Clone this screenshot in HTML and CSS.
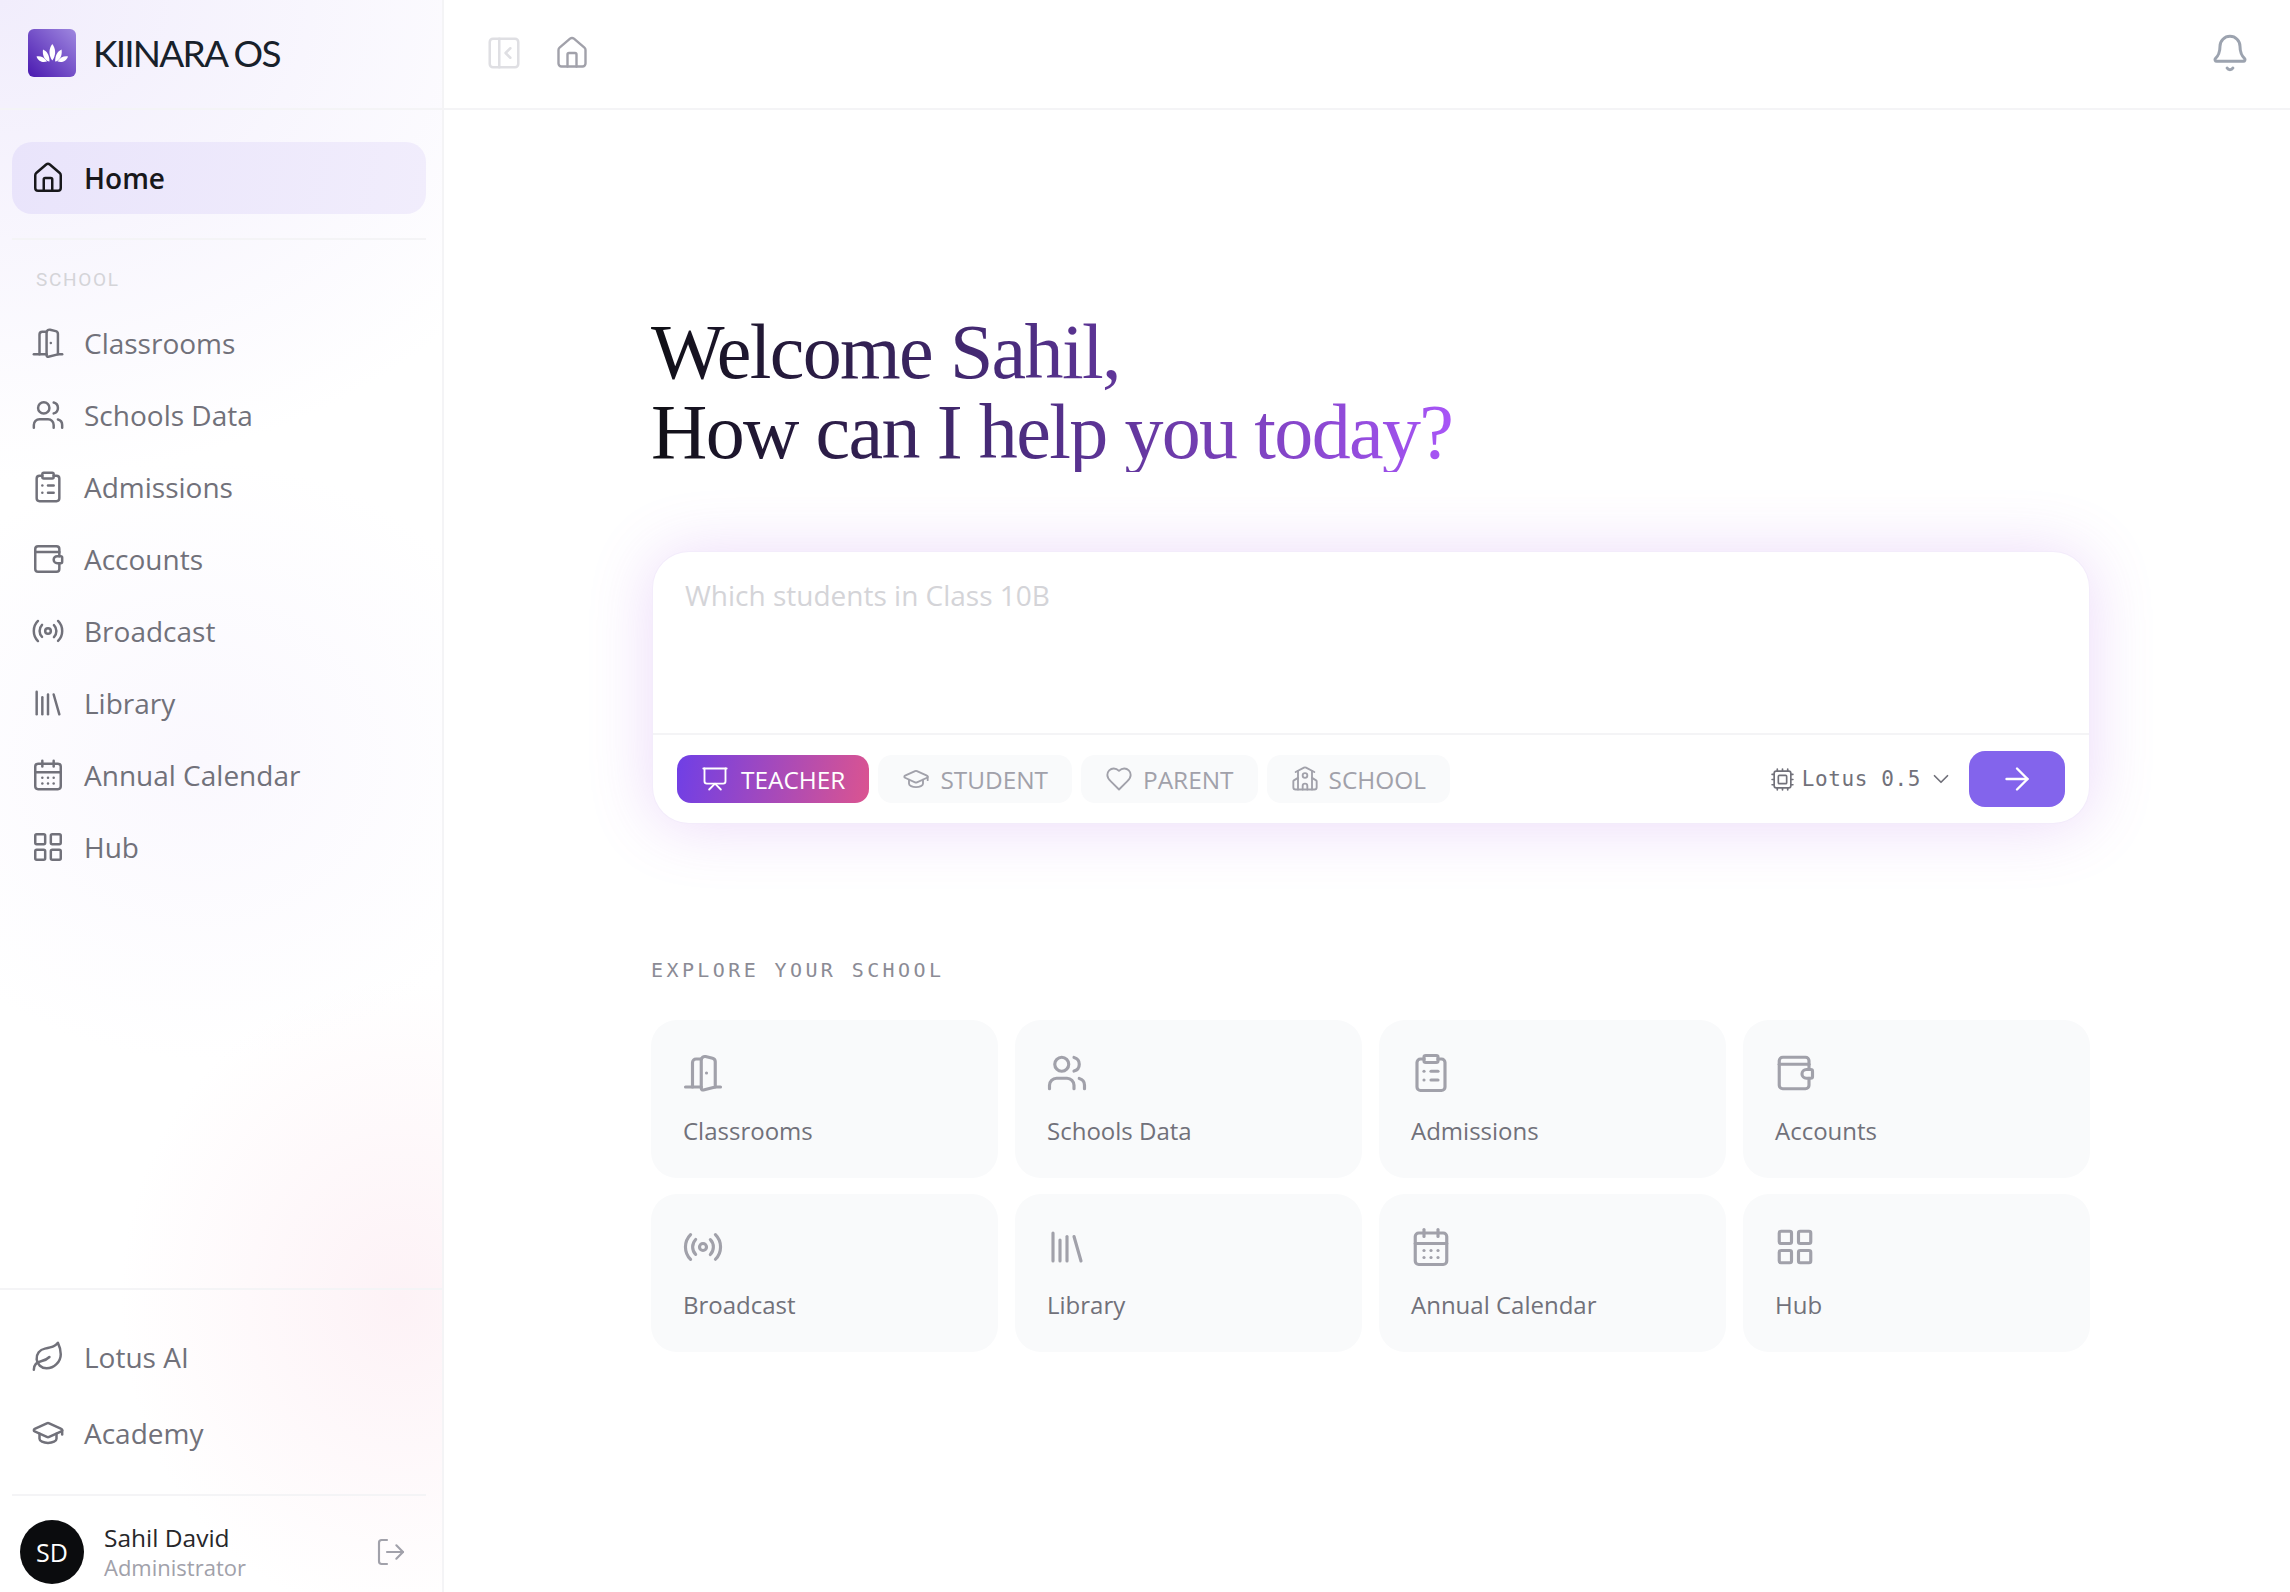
FILE: index.html
```
<!DOCTYPE html>
<html>

<head>
    <title>Kiinara OS</title>
    <link rel="stylesheet" href="styles.css">
</head>

<body>
    <svg class="sprite" xmlns="http://www.w3.org/2000/svg">
        <symbol id="i-home" viewBox="0 0 24 24"><path d="M15 21v-8a1 1 0 0 0-1-1h-4a1 1 0 0 0-1 1v8"/><path d="M3 10a2 2 0 0 1 .709-1.528l7-6a2 2 0 0 1 2.582 0l7 6A2 2 0 0 1 21 10v9a2 2 0 0 1-2 2H5a2 2 0 0 1-2-2z"/></symbol>
        <symbol id="i-door" viewBox="0 0 24 24"><path d="M11 20H2"/><path d="M11 4.562v16.157a1 1 0 0 0 1.242.97L19 20V5.562a2 2 0 0 0-1.515-1.94l-4-1A2 2 0 0 0 11 4.561z"/><path d="M11 4H8a2 2 0 0 0-2 2v14"/><path d="M14 12h.01"/><path d="M22 20h-3"/></symbol>
        <symbol id="i-users" viewBox="0 0 24 24"><path d="M16 21v-2a4 4 0 0 0-4-4H6a4 4 0 0 0-4 4v2"/><circle cx="9" cy="7" r="4"/><path d="M22 21v-2a4 4 0 0 0-3-3.87"/><path d="M16 3.13a4 4 0 0 1 0 7.75"/></symbol>
        <symbol id="i-clipboard" viewBox="0 0 24 24"><rect x="8" y="2" width="8" height="4" rx="1"/><path d="M16 4h2a2 2 0 0 1 2 2v14a2 2 0 0 1-2 2H6a2 2 0 0 1-2-2V6a2 2 0 0 1 2-2h2"/><path d="M12 11h4"/><path d="M12 16h4"/><path d="M8 11h.01"/><path d="M8 16h.01"/></symbol>
        <symbol id="i-wallet" viewBox="0 0 24 24"><path d="M20 10V5a2 2 0 0 0-2-2H5a2 2 0 0 0-2 2v14a2 2 0 0 0 2 2h13a2 2 0 0 0 2-2v-4"/><path d="M3 7h17"/><path d="M18.5 10H21a1 1 0 0 1 1 1v3a1 1 0 0 1-1 1h-2.500a2.500 2.500 0 0 1 0-5z"/></symbol>
        <symbol id="i-radio" viewBox="0 0 24 24"><path d="M4.900 19.100C1 15.200 1 8.800 4.900 4.900"/><path d="M7.800 16.200c-2.300-2.300-2.300-6.100 0-8.500"/><circle cx="12" cy="12" r="2"/><path d="M16.200 7.800c2.300 2.300 2.300 6.100 0 8.500"/><path d="M19.100 4.900C23 8.800 23 15.100 19.100 19"/></symbol>
        <symbol id="i-library" viewBox="0 0 24 24"><path d="m16 6 4 14"/><path d="M12 6v14"/><path d="M8 8v12"/><path d="M4 4v16"/></symbol>
        <symbol id="i-calendar" viewBox="0 0 24 24"><path d="M8 2v4"/><path d="M16 2v4"/><rect x="3" y="4" width="18" height="18" rx="2"/><path d="M3 10h18"/><path d="M8 14h.01"/><path d="M12 14h.01"/><path d="M16 14h.01"/><path d="M8 18h.01"/><path d="M12 18h.01"/><path d="M16 18h.01"/></symbol>
        <symbol id="i-grid" viewBox="0 0 24 24"><rect x="3" y="3" width="7" height="7" rx="1"/><rect x="14" y="3" width="7" height="7" rx="1"/><rect x="14" y="14" width="7" height="7" rx="1"/><rect x="3" y="14" width="7" height="7" rx="1"/></symbol>
        <symbol id="i-leaf" viewBox="0 0 24 24"><path d="M11 20A7 7 0 0 1 9.800 6.100C15.500 5 17 4.480 19 2c1 2 2 4.180 2 8 0 5.500-4.780 10-10 10Z"/><path d="M2 21c0-3 1.850-5.360 5.080-6C9.500 14.520 12 13 13 12"/></symbol>
        <symbol id="i-cap" viewBox="0 0 24 24"><path d="M21.420 10.922a1 1 0 0 0-.019-1.838L12.830 5.180a2 2 0 0 0-1.660 0L2.600 9.080a1 1 0 0 0 0 1.832l8.570 3.908a2 2 0 0 0 1.660 0z"/><path d="M22 10v3"/><path d="M6 12.500V16a6 3 0 0 0 12 0v-3.500"/></symbol>
        <symbol id="i-logout" viewBox="0 0 24 24"><path d="M9 21H5a2 2 0 0 1-2-2V5a2 2 0 0 1 2-2h4"/><path d="m16 17 5-5-5-5"/><path d="M21 12H9"/></symbol>
        <symbol id="i-panel" viewBox="0 0 24 24"><rect x="3" y="3" width="18" height="18" rx="2"/><path d="M9 3v18"/><path d="m16 15-3-3 3-3"/></symbol>
        <symbol id="i-bell" viewBox="0 0 24 24"><path d="M10.268 21a2 2 0 0 0 3.464 0"/><path d="M3.262 15.326A1 1 0 0 0 4 17h16a1 1 0 0 0 .740-1.673C19.410 13.956 18 12.499 18 8A6 6 0 0 0 6 8c0 4.499-1.411 5.956-2.738 7.326"/></symbol>
        <symbol id="i-board" viewBox="0 0 24 24"><path d="M2 3h20"/><path d="M21 3v11a2 2 0 0 1-2 2H5a2 2 0 0 1-2-2V3"/><path d="m7 21 5-5 5 5"/></symbol>
        <symbol id="i-heart" viewBox="0 0 24 24"><path d="M19 14c1.490-1.460 3-3.210 3-5.500A5.500 5.500 0 0 0 16.500 3c-1.760 0-3 .500-4.500 2-1.500-1.500-2.740-2-4.500-2A5.500 5.500 0 0 0 2 8.500c0 2.300 1.500 4.050 3 5.500l7 7Z"/></symbol>
        <symbol id="i-school" viewBox="0 0 24 24"><path d="M14 21v-3a2 2 0 0 0-4 0v3"/><path d="M18 5v16"/><path d="m4 6 7.106-3.790a2 2 0 0 1 1.788 0L20 6"/><path d="m6 11-3.520 2.147a1 1 0 0 0-.480.854V19a2 2 0 0 0 2 2h16a2 2 0 0 0 2-2v-5a1 1 0 0 0-.480-.853L18 11"/><path d="M6 5v16"/><circle cx="12" cy="9" r="2"/></symbol>
        <symbol id="i-cpu" viewBox="0 0 24 24"><path d="M12 20v2"/><path d="M12 2v2"/><path d="M17 20v2"/><path d="M17 2v2"/><path d="M2 12h2"/><path d="M2 17h2"/><path d="M2 7h2"/><path d="M20 12h2"/><path d="M20 17h2"/><path d="M20 7h2"/><path d="M7 20v2"/><path d="M7 2v2"/><rect x="4" y="4" width="16" height="16" rx="2"/><rect x="8" y="8" width="8" height="8" rx="1"/></symbol>
        <symbol id="i-chevron" viewBox="0 0 24 24"><path d="m6 9 6 6 6-6"/></symbol>
        <symbol id="i-arrow" viewBox="0 0 24 24"><path d="M5 12h14"/><path d="m12 5 7 7-7 7"/></symbol>
    </svg>

    <div class="app">
        <aside class="sidebar">
            <div class="brand">
                <div class="brand-logo">
                    <svg viewBox="0 0 48 48" width="48" height="48">
                        <path d="M24.300 15c3.500 4.500 4 11 0 16.500-4-5.500-3.500-12 0-16.500z"/>
                        <path d="M15 20.500c3.500 1.500 6.500 5 6.500 12-4-.500-7.500-5-6.500-12z"/>
                        <path d="M33.600 20.500c-3.500 1.500-6.500 5-6.500 12 4-.500 7.500-5 6.500-12z"/>
                        <path d="M8.500 27.500c4-.800 8 1 10.500 5-4 1.200-8.500.500-10.500-5z"/>
                        <path d="M40 27.500c-4-.800-8 1-10.500 5 4 1.200 8.500.500 10.500-5z"/>
                    </svg>
                </div>
                <span class="brand-name">KIINARA OS</span>
            </div>

            <nav class="nav-top">
                <a class="nav-item nav-active"><svg class="icon"><use href="#i-home"/></svg>Home</a>
            </nav>

            <div class="nav-school">
                <div class="nav-label">SCHOOL</div>
                <a class="nav-item"><svg class="icon"><use href="#i-door"/></svg>Classrooms</a>
                <a class="nav-item"><svg class="icon"><use href="#i-users"/></svg>Schools Data</a>
                <a class="nav-item"><svg class="icon"><use href="#i-clipboard"/></svg>Admissions</a>
                <a class="nav-item"><svg class="icon"><use href="#i-wallet"/></svg>Accounts</a>
                <a class="nav-item"><svg class="icon"><use href="#i-radio"/></svg>Broadcast</a>
                <a class="nav-item"><svg class="icon"><use href="#i-library"/></svg>Library</a>
                <a class="nav-item"><svg class="icon"><use href="#i-calendar"/></svg>Annual Calendar</a>
                <a class="nav-item"><svg class="icon"><use href="#i-grid"/></svg>Hub</a>
            </div>

            <div class="nav-bottom">
                <a class="nav-item"><svg class="icon"><use href="#i-leaf"/></svg>Lotus AI</a>
                <a class="nav-item"><svg class="icon"><use href="#i-cap"/></svg>Academy</a>
            </div>

            <div class="user">
                <div class="avatar">SD</div>
                <div class="user-info">
                    <div class="user-name">Sahil David</div>
                    <div class="user-role">Administrator</div>
                </div>
                <svg class="icon logout"><use href="#i-logout"/></svg>
            </div>
        </aside>

        <div class="main">
            <header class="topbar">
                <svg class="icon panel-icon"><use href="#i-panel"/></svg>
                <svg class="icon top-home"><use href="#i-home"/></svg>
                <svg class="icon bell"><use href="#i-bell"/></svg>
            </header>

            <div class="content">
                <h1 class="welcome">Welcome Sahil,<br>How can I help you today?</h1>

                <div class="prompt">
                    <div class="prompt-input">Which students in Class 10B</div>
                    <div class="prompt-bar">
                        <div class="role-tab role-active"><svg class="icon"><use href="#i-board"/></svg>TEACHER</div>
                        <div class="role-tab"><svg class="icon"><use href="#i-cap"/></svg>STUDENT</div>
                        <div class="role-tab"><svg class="icon"><use href="#i-heart"/></svg>PARENT</div>
                        <div class="role-tab"><svg class="icon"><use href="#i-school"/></svg>SCHOOL</div>
                        <div class="model">
                            <svg class="icon"><use href="#i-cpu"/></svg>
                            <span>Lotus 0.5</span>
                            <svg class="icon chevron"><use href="#i-chevron"/></svg>
                        </div>
                        <button class="send"><svg class="icon"><use href="#i-arrow"/></svg></button>
                    </div>
                </div>

                <div class="explore-label">EXPLORE YOUR SCHOOL</div>
                <div class="explore-grid">
                    <a class="card"><svg class="icon"><use href="#i-door"/></svg>Classrooms</a>
                    <a class="card"><svg class="icon"><use href="#i-users"/></svg>Schools Data</a>
                    <a class="card"><svg class="icon"><use href="#i-clipboard"/></svg>Admissions</a>
                    <a class="card"><svg class="icon"><use href="#i-wallet"/></svg>Accounts</a>
                    <a class="card"><svg class="icon"><use href="#i-radio"/></svg>Broadcast</a>
                    <a class="card"><svg class="icon"><use href="#i-library"/></svg>Library</a>
                    <a class="card"><svg class="icon"><use href="#i-calendar"/></svg>Annual Calendar</a>
                    <a class="card"><svg class="icon"><use href="#i-grid"/></svg>Hub</a>
                </div>
            </div>
        </div>
    </div>
</body>

</html>
```

FILE: styles.css
```
body {
    margin: 0;
    overflow: hidden;
    background: #fff;
    font-family: "Open Sans", "Noto Sans", sans-serif;
}

.sprite {
    display: none;
}

.icon {
    flex: none;
    fill: none;
    stroke: currentColor;
    stroke-width: 1.6;
    stroke-linecap: round;
    stroke-linejoin: round;
}

.app {
    display: flex;
    height: 100vh;
}

/* Sidebar */
.sidebar {
    width: 444px;
    flex: none;
    display: flex;
    flex-direction: column;
    border-right: 2px solid #f4f4f6;
    box-sizing: border-box;
    background:
        radial-gradient(ellipse 280px 320px at 400px 1300px, #fdf2f6 0%, rgba(253, 242, 246, 0) 100%),
        radial-gradient(ellipse 340px 300px at 200px 760px, #faf8fe 0%, rgba(250, 248, 254, 0) 100%),
        radial-gradient(ellipse 620px 480px at 0 0, #f1edfc 0%, rgba(241, 237, 252, 0) 100%),
        #fff;
}

.brand {
    height: 110px;
    flex: none;
    display: flex;
    align-items: center;
    gap: 17px;
    padding: 0 0 2px 28px;
    border-bottom: 2px solid #f4f4f6;
    box-sizing: border-box;
}

.brand-logo {
    width: 48px;
    height: 48px;
    border-radius: 6px;
    background: linear-gradient(45deg, #4a19b0, #9f88e0);
}

.brand-logo svg {
    display: block;
    fill: #fff;
}

.brand-name {
    margin-top: -2px;
    font-family: "Lato", sans-serif;
    font-size: 37px;
    letter-spacing: -1.8px;
    color: #18212b;
}

.nav-item {
    display: flex;
    align-items: center;
    height: 72px;
    padding-left: 31px;
    gap: 19px;
    font-size: 28px;
    color: #71717a;
    box-sizing: border-box;
}

.nav-item .icon {
    width: 34px;
    height: 34px;
    stroke-width: 1.75;
}

.nav-top {
    margin: 32px 16px 0 12px;
    padding-bottom: 24px;
    border-bottom: 2px solid #f4f4f6;
}

.nav-top .nav-item {
    padding-left: 19px;
}

.nav-active {
    border-radius: 20px;
    background: linear-gradient(100deg, #e9e4fb, #f1edfc);
    color: #18181b;
    font-weight: 600;
}

.nav-label {
    height: 32px;
    margin: 24px 0 11px 36px;
    font-family: "Roboto", sans-serif;
    font-size: 19px;
    line-height: 32px;
    letter-spacing: 1.7px;
    color: #d4d4d8;
}

.nav-bottom {
    margin-top: auto;
    padding: 29px 0 23px;
    border-top: 2px solid #f4f4f6;
}

.nav-bottom .nav-item {
    height: 76px;
}

.user {
    display: flex;
    align-items: flex-start;
    margin: 0 16px 0 12px;
    height: 98px;
    padding: 24px 0 0 8px;
    border-top: 2px solid #f4f4f6;
    box-sizing: border-box;
}

.avatar {
    width: 64px;
    height: 64px;
    flex: none;
    border-radius: 50%;
    background: #0b0c0e;
    color: #fff;
    font-size: 25px;
    font-weight: 500;
    line-height: 64px;
    text-align: center;
}

.user-info {
    margin: 3px 0 0 20px;
}

.user-name {
    font-size: 24.500px;
    line-height: 30px;
    color: #27272a;
}

.user-role {
    font-size: 22px;
    line-height: 28px;
    color: #a1a1aa;
}

.logout {
    width: 32px;
    height: 32px;
    margin: 16px 19px 0 auto;
    color: #a1a1aa;
}

/* Main column */
.main {
    flex: 1;
    min-width: 0;
}

.topbar {
    height: 110px;
    display: flex;
    align-items: center;
    padding: 0 40px 2px 41px;
    border-bottom: 2px solid #f4f4f6;
    box-sizing: border-box;
    color: #a1a1aa;
}

.panel-icon {
    width: 38px;
    height: 38px;
    color: #dfdfe3;
}

.top-home {
    width: 36px;
    height: 36px;
    margin-left: 31px;
}

.bell {
    width: 40px;
    height: 40px;
    margin-left: auto;
    stroke-width: 1.8;
    color: #9ca3af;
}

.content {
    width: 1439px;
    margin-left: 207px;
    padding-top: 202px;
}

.welcome {
    display: inline-block;
    margin: 0;
    font-family: "Liberation Serif", serif;
    font-size: 78px;
    font-weight: 400;
    line-height: 80px;
    letter-spacing: -1.650px;
    background: linear-gradient(90deg, #0f0f14 0%, #4a2c7d 45%, #a855f7 100%);
    -webkit-background-clip: text;
    background-clip: text;
    color: transparent;
}

.prompt {
    margin-top: 80px;
    margin-left: 2px;
    width: 1436px;
    height: 271px;
    display: flex;
    flex-direction: column;
    border-radius: 36px;
    background: #fff;
    box-shadow: 0 0 0 1px #f3ecfb, 0 2px 64px rgba(170, 90, 230, 0.24);
}

.prompt-input {
    flex: 1;
    padding: 24px 32px;
    font-size: 28px;
    line-height: 38px;
    color: #d4d4d8;
}

.prompt-bar {
    height: 88px;
    display: flex;
    align-items: center;
    gap: 9px;
    padding: 0 24px;
    border-top: 2px solid #f4f4f6;
}

.role-tab {
    height: 48px;
    display: flex;
    align-items: center;
    gap: 10px;
    padding: 0 24px;
    border-radius: 14px;
    background: #f9fafb;
    font-size: 24.400px;
    color: #a1a1aa;
}

.role-tab .icon {
    width: 28px;
    height: 28px;
}

.role-active {
    gap: 12px;
    background: linear-gradient(100deg, #6f3fe6, #db5490);
    color: #fff;
}

.model {
    display: flex;
    align-items: center;
    margin-left: auto;
    gap: 7px;
    font-family: "DejaVu Sans Mono", monospace;
    font-size: 21px;
    letter-spacing: 0.6px;
    color: #71717a;
}

.model .icon {
    width: 25px;
    height: 25px;
}

.model .chevron {
    width: 26px;
    height: 26px;
}

.send {
    width: 96px;
    height: 56px;
    margin-left: 6px;
    padding: 0;
    border: none;
    border-radius: 16px;
    background: #8364ec;
    color: #fff;
    display: flex;
    align-items: center;
    justify-content: center;
}

.send .icon {
    width: 36px;
    height: 36px;
}

.explore-label {
    margin-top: 133px;
    font-family: "DejaVu Sans Mono", monospace;
    font-size: 20px;
    line-height: 28px;
    letter-spacing: 3.400px;
    color: #8b8b95;
}

.explore-grid {
    display: grid;
    grid-template-columns: repeat(4, 347px);
    grid-auto-rows: 158px;
    gap: 16px 17px;
    margin-top: 36px;
}

.card {
    display: flex;
    flex-direction: column;
    align-items: flex-start;
    gap: 20px;
    padding: 32px 32px 0;
    border-radius: 26px;
    background: #f9fafb;
    font-size: 24px;
    color: #71717a;
    box-sizing: border-box;
}

.card .icon {
    width: 42px;
    height: 42px;
    margin-left: -1px;
    color: #a1a1aa;
    stroke-width: 1.8;
}
```
